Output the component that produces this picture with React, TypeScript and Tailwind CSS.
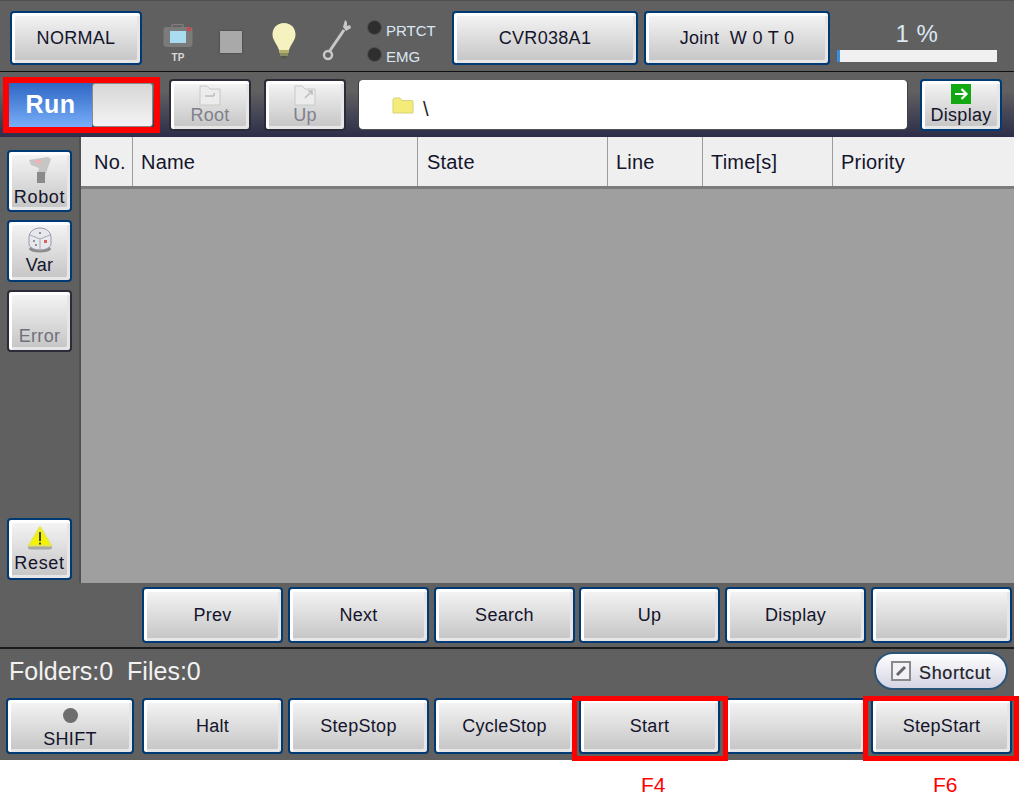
import React from "react";

const font = "font-['Liberation_Sans',Arial,sans-serif]";

function Btn({ className = "", children, dark = false }: { className?: string; children?: React.ReactNode; dark?: boolean }) {
  return (
    <div
      className={`relative flex flex-col items-center justify-center shrink-0 rounded-[4px] border-2 ${dark ? "border-[#2c2c38]" : "border-[#003a75]"} bg-gradient-to-b from-[#f6f6f6] to-[#c4c4c4] shadow-[inset_3px_3px_0_#ffffff,inset_-3px_-3px_0_#e6e6e6] text-[18px] tracking-[0.3px] text-[#14142c] ${className}`}
    >
      {children}
    </div>
  );
}

function Highlight({ className = "" }: { className?: string }) {
  return <div className={`absolute border-[5px] border-[#ff0000] z-10 ${className}`} />;
}

const CamIcon = () => (
  <svg width="30" height="24" viewBox="0 0 30 24">
    <rect x="9" y="0.5" width="11" height="5" rx="1" fill="none" stroke="#7d7d7d" strokeWidth="1.5" />
    <rect x="0.5" y="3" width="29" height="20" rx="3" fill="#7b7b7b" />
    <rect x="7" y="7" width="16" height="12" fill="#a8dcee" />
    <rect x="24" y="3" width="4" height="4" fill="#c84a4a" />
  </svg>
);

const Bulb = () => (
  <svg width="26" height="38" viewBox="0 0 26 38">
    <path d="M13 1C6 1 1.500 6 1.500 12.500C1.500 18 6 22 8 28L18 28C20 22 24.500 18 24.500 12.500C24.500 6 20 1 13 1Z" fill="#f5f2bf" />
    <rect x="8" y="28" width="10" height="3" fill="#b5ae6a" />
    <rect x="9" y="31" width="8" height="3" fill="#8d8d62" />
    <rect x="10.500" y="34" width="5" height="2.500" fill="#55554a" />
  </svg>
);

const Wrench = () => (
  <svg width="30" height="42" viewBox="0 0 30 42">
    <path d="M22 11L7 33" stroke="#c8c8c8" strokeWidth="3" fill="none" />
    <path d="M23 1L21 8L24 12L29 9L28 6L25 7L25 3Z" fill="#c8c8c8" />
    <circle cx="6" cy="36" r="4" fill="none" stroke="#c8c8c8" strokeWidth="2.500" />
  </svg>
);

const Led = () => <div className="w-[15px] h-[15px] shrink-0 rounded-full bg-[#2e2e2e] border border-[#525252]" />;

const FolderRoot = () => (
  <svg width="22" height="22" viewBox="0 0 22 22">
    <path d="M1 2H8L11 5H21V21H1Z" fill="#ececec" stroke="#c8c8c8" />
    <path d="M6 12H15M15 9V12" stroke="#bcbcbc" strokeWidth="1.500" fill="none" />
  </svg>
);

const FolderUp = () => (
  <svg width="22" height="22" viewBox="0 0 22 22">
    <path d="M1 2H8L11 5H21V21H1Z" fill="#ececec" stroke="#c8c8c8" />
    <path d="M11 14L18 7M14 7H18V11" stroke="#bcbcbc" strokeWidth="1.500" fill="none" />
  </svg>
);

const RobotIcon = () => (
  <svg width="24" height="28" viewBox="0 0 24 28">
    <path d="M1 4L20 1L23 3L19 14L17 20L9 20L11 12L3 9Z" fill="#c6c6c6" />
    <path d="M7 4L14 3.500L13 8L8 7Z" fill="#f0b4b4" />
    <path d="M9 16L17 16L17 27L9 27Z" fill="#8a8a8a" />
  </svg>
);

const Dice = () => (
  <svg width="26" height="26" viewBox="0 0 26 26">
    <ellipse cx="13" cy="22" rx="11" ry="3.500" fill="#8c8c8c" />
    <path d="M13 1C19 1 24 5 24 10V17C24 20 19 23 13 23C7 23 2 20 2 17V10C2 5 7 1 13 1Z" fill="#e6e8ee" stroke="#9a9aa6" />
    <path d="M3 8L13 12L23 8M13 12V23" stroke="#a8a8b4" fill="none" />
    <rect x="17" y="13" width="3" height="3" fill="#d8605f" />
    <circle cx="13" cy="6" r="1" fill="#777" />
    <circle cx="7" cy="14" r="1" fill="#777" />
    <circle cx="9" cy="18" r="1" fill="#777" />
  </svg>
);

const Warn = () => (
  <svg width="26" height="25" viewBox="0 0 26 25">
    <rect x="1" y="20" width="24" height="4.500" rx="2" fill="#a8a8a8" />
    <path d="M13 2L24 20.500H2Z" fill="#f4f400" stroke="#e8e84c" strokeLinejoin="round" strokeWidth="2" />
    <rect x="12" y="7" width="2" height="9" fill="#444" />
    <rect x="12" y="17.500" width="2" height="2" fill="#444" />
  </svg>
);

const Arrow = () => (
  <svg width="20" height="20" viewBox="0 0 20 20" className="block">
    <rect width="20" height="20" fill="#12a812" />
    <path d="M4 10H15M10.500 5L15.500 10L10.500 15" stroke="#ffffff" strokeWidth="2.200" fill="none" />
  </svg>
);

const columns: [string, string][] = [
  ["No.", "w-[52px] pl-[13px]"],
  ["Name", "w-[285px] pl-[8px]"],
  ["State", "w-[190px] pl-[9px]"],
  ["Line", "w-[95px] pl-[8px]"],
  ["Time[s]", "w-[130px] pl-[8px]"],
  ["Priority", "flex-1 pl-[8px]"],
];

export default function App() {
  return (
    <div className={`w-[1020px] h-[797px] bg-white flex flex-col ${font}`}>
      <div className="w-[1014px] h-[760px] bg-[#606060] flex flex-col shrink-0">
        {/* top bar */}
        <div className="h-[71px] pl-[10px] pt-[4px] flex items-center shrink-0 border-t border-[#505050]">
          <Btn className="w-[132px] h-[54px]">NORMAL</Btn>
          <div className="w-[30px] ml-[21px] mt-[12px] flex flex-col items-center text-[#d8d8d8] text-[10px] font-bold leading-[12px]">
            <CamIcon />
            <span className="mt-[4px]">TP</span>
          </div>
          <div className="w-[22px] h-[22px] ml-[27px] mt-[8px] bg-[#a9a9a9] shadow-[0_0_2px_#3a3a3a]" />
          <div className="ml-[29px] mt-[5px]"><Bulb /></div>
          <div className="ml-[25px] mt-[3px]"><Wrench /></div>
          <div className="ml-[15px] mt-[5px] flex flex-col gap-[11px] w-[71px] text-[#dbe7f2] text-[15px] leading-[16px]">
            <div className="flex items-center gap-[4px]"><Led /><span className="translate-y-[4px]">PRTCT</span></div>
            <div className="flex items-center gap-[4px]"><Led /><span className="translate-y-[3px]">EMG</span></div>
          </div>
          <Btn className="w-[186px] h-[54px] ml-[14px]">CVR038A1</Btn>
          <Btn className="w-[186px] h-[54px] ml-[6px]">Joint&nbsp; W 0 T 0</Btn>
          <div className="ml-[7px] mt-[6px] w-[160px] flex flex-col items-center">
            <span className="text-[#dbe7f2] text-[24px] leading-[28px] tracking-[0.5px]">1 %</span>
            <div className="w-full h-[12px] mt-[2px] bg-[#f0f0f0] flex">
              <div className="w-[3px] bg-[#3c8ce0]" />
            </div>
          </div>
        </div>
        <div className="h-px bg-[#101010] shrink-0" />
        {/* second row */}
        <div className="h-[65px] flex items-center shrink-0 bg-gradient-to-b from-[#606060] from-30% to-[#2d2d49] relative">
          <div className="relative ml-[9px] w-[144px] h-[44px] flex rounded-[2px]">
            <Highlight className="-left-[6px] -right-[7px] -top-[6px] -bottom-[6px] border-[6px]" />
            <div className="w-[83px] h-full bg-gradient-to-b from-[#2e66c4] to-[#78aef8] flex items-center justify-center text-white text-[25px] font-bold tracking-[0.5px]">Run</div>
            <div className="flex-1 h-full rounded-[3px] bg-gradient-to-b from-[#d6d6d6] to-[#f4f4f4] border border-[#8a8a8a]" />
          </div>
          <Btn dark className="w-[82px] h-[52px] ml-[16px] !text-[#80808c] !leading-[20px]">
            <FolderRoot />
            <span className="-mt-[1px]">Root</span>
          </Btn>
          <Btn dark className="w-[82px] h-[52px] ml-[13px] !text-[#80808c] !leading-[20px]">
            <FolderUp />
            <span className="-mt-[1px]">Up</span>
          </Btn>
          <div className="ml-[13px] w-[548px] h-[49px] bg-white rounded-[4px] flex items-center pl-[33px] shadow-[0_1px_0_#505050,-1px_0_0_#404040,1px_0_0_#404040] text-[20px] text-[#222]">
            <svg width="22" height="18" viewBox="0 0 22 18" className="mt-[3px]">
              <path d="M1 3C1 1.500 2 1 3 1H8L10 3.500H20C21 3.500 21 4.500 21 5V16H1Z" fill="#f4ec78" stroke="#d8d27a" strokeWidth="1" />
            </svg>
            <span className="ml-[9px] mt-[8px]">\</span>
          </div>
          <Btn className="w-[82px] h-[52px] ml-[13px] !leading-[20px]">
            <Arrow />
            <span className="mt-[1px]">Display</span>
          </Btn>
        </div>
        {/* middle */}
        <div className="h-[446px] flex shrink-0">
          <div className="w-[81px] h-full shrink-0 pl-[7px] pt-[13px] pb-[3px] flex flex-col gap-[8px] border-r-2 border-[#505050]">
            <Btn className="w-[65px] h-[62px] !leading-[20px] tracking-[0.7px]">
              <RobotIcon />
              <span className="mt-[3px]">Robot</span>
            </Btn>
            <Btn className="w-[65px] h-[62px] !leading-[20px]">
              <Dice />
              <span className="mt-[2px]">Var</span>
            </Btn>
            <Btn dark className="w-[65px] h-[62px] !justify-end pb-[4px] !leading-[20px] !text-[#70707c]">
              <span>Error</span>
            </Btn>
            <Btn className="w-[65px] h-[62px] mt-auto !leading-[20px] tracking-[0.7px]">
              <Warn />
              <span className="mt-[3px]">Reset</span>
            </Btn>
          </div>
          <div className="flex-1 flex flex-col bg-[#9f9f9f]">
            <div className="h-[49px] flex bg-[#efefef] border-b-[3px] border-[#7c7c7c] box-content shrink-0 text-[20px] tracking-[0.2px] text-[#14142c]">
              {columns.map(([label, cls], i) => (
                <div
                  key={label}
                  className={`h-full flex items-center shrink-0 ${cls} ${i < columns.length - 1 ? "border-r border-[#9c9c9c]" : ""}`}
                >
                  {label}
                </div>
              ))}
            </div>
          </div>
        </div>
        {/* action row */}
        <div className="h-[64px] flex items-center pl-[142px] gap-[5px] shrink-0">
          <Btn className="w-[141px] h-[56px]">Prev</Btn>
          <Btn className="w-[141px] h-[56px]">Next</Btn>
          <Btn className="w-[141px] h-[56px]">Search</Btn>
          <Btn className="w-[141px] h-[56px] -ml-px">Up</Btn>
          <Btn className="w-[141px] h-[56px]">Display</Btn>
          <Btn className="w-[141px] h-[56px]" />
        </div>
        <div className="h-[2px] bg-[#1c1c1c] shrink-0" />
        {/* status */}
        <div className="h-[49px] flex items-center pl-[9px] pr-[6px] shrink-0 text-[#f2f2f2] text-[25px]">
          <span className="whitespace-pre -mt-[4px]">Folders:0  Files:0</span>
          <div className="ml-auto w-[134px] h-[38px] rounded-full border-[2px] border-[#2a5478] bg-gradient-to-b from-[#ffffff] to-[#d4d4e4] flex items-center justify-center gap-[8px] text-[18px] text-[#222228] -mt-[5px]">
            <svg width="20" height="20" viewBox="0 0 20 20">
              <rect x="1" y="1" width="18" height="18" fill="#f2f2f6" stroke="#8a8a8a" strokeWidth="2" />
              <path d="M6 14L14 6" stroke="#666" strokeWidth="3" fill="none" />
            </svg>
            <span className="tracking-[0.6px] translate-y-[2px] [-webkit-text-stroke:0.2px_#222228]">Shortcut</span>
          </div>
        </div>
        {/* bottom row */}
        <div className="h-[56px] flex pl-[6px] shrink-0">
          <Btn className="w-[128px] h-[56px] !justify-end pb-[3px] !leading-[20px]">
            <div className="w-[15px] h-[15px] rounded-full bg-[#6e6e6e] mb-[6px]" />
            <span>SHIFT</span>
          </Btn>
          <div className="flex gap-[5px] ml-[8px]">
            <Btn className="w-[141px] h-[56px]">Halt</Btn>
            <Btn className="w-[141px] h-[56px]">StepStop</Btn>
            <Btn className="w-[141px] h-[56px]">CycleStop</Btn>
            <Btn className="w-[141px] h-[56px] -ml-px">
              Start
              <Highlight className="-left-[9px] -right-[10px] -top-[4px] -bottom-[9px]" />
            </Btn>
            <Btn className="w-[141px] h-[56px]" />
            <Btn className="w-[141px] h-[56px]">
              StepStart
              <Highlight className="-left-[10px] -right-[9px] -top-[4px] -bottom-[9px]" />
            </Btn>
          </div>
        </div>
      </div>
      {/* key labels */}
      <div className="relative h-[37px] flex text-[#ff0000] text-[21px] leading-[24px] pt-[13px]">
        <span className="ml-[641px] w-[292px]">F4</span>
        <span>F6</span>
      </div>
    </div>
  );
}
